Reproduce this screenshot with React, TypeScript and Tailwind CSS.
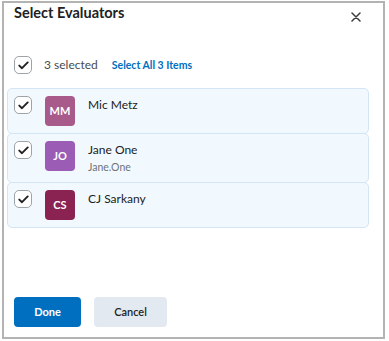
import React from "react";

function Check() {
  return (
    <div className="w-[18px] h-[18px] shrink-0 rounded-[5px] border border-[#9ea3a8] bg-white flex items-center justify-center">
      <svg width="11" height="9" viewBox="0 0 11 9" fill="none">
        <path d="M1.3 4.6 L4 7.2 L9.7 1.4" stroke="#202122" strokeWidth="1.9" strokeLinecap="round" strokeLinejoin="round" />
      </svg>
    </div>
  );
}

type Person = { initials: string; name: string; sub?: string; color: string };

const people: Person[] = [
  { initials: "MM", name: "Mic Metz", color: "bg-[#a85a8b]" },
  { initials: "JO", name: "Jane One", sub: "Jane.One", color: "bg-[#9a5cb4]" },
  { initials: "CS", name: "CJ Sarkany", color: "bg-[#8a2252]" },
];

export default function App() {
  return (
    <div className="w-[389px] h-[341px] bg-white pl-[2px] pt-[1px]" style={{ fontFamily: "Lato, 'Open Sans', sans-serif" }}>
      <div className="w-[383px] h-[338px] border-2 border-[#b3b3b3] flex flex-col text-[#202122]">
        <div className="flex items-start justify-between pl-[10px] pr-[22px]">
          <div className="text-[14.5px] leading-[20px] font-bold">Select Evaluators</div>
          <svg className="mt-[9px]" width="10" height="10" viewBox="0 0 10 10" fill="none">
            <path d="M1 1 L9 9 M9 1 L1 9" stroke="#3a3c3e" strokeWidth="1.5" strokeLinecap="round" />
          </svg>
        </div>
        <div className="flex items-center mt-[33px] pl-[10px]">
          <Check />
          <span className="ml-[12px] text-[12px] leading-[18px] text-[#494c4e]">3 selected</span>
          <span className="ml-[14px] text-[10.5px] leading-[18px] font-bold text-[#006fbf]">Select All 3 Items</span>
        </div>
        <div className="mt-[14px] ml-[3px] w-[362px] flex flex-col">
          {people.map((p) => (
            <div key={p.initials} className="flex items-start border border-[#d3e5f5] bg-[#f2f9fe] rounded-[5px] pl-[6px] py-[7px] -mt-px first:mt-0">
              <Check />
              <div className={`ml-[13px] w-[30px] h-[30px] shrink-0 rounded-[4px] ${p.color} flex items-center justify-center text-white text-[11px] font-bold`}>
                {p.initials}
              </div>
              <div className="ml-[13px] flex flex-col">
                <span className="text-[12px] leading-[18px] text-[#202122]">{p.name}</span>
                {p.sub && <span className="text-[10.5px] leading-[16px] text-[#6e7376]">{p.sub}</span>}
              </div>
            </div>
          ))}
        </div>
        <div className="mt-auto flex gap-[13px] pl-[10px] pb-[10px]">
          <button className="w-[67px] h-[30px] rounded-[4px] bg-[#006fbf] text-white text-[11px] font-bold">Done</button>
          <button className="w-[73px] h-[30px] rounded-[4px] bg-[#e3e9f1] text-[#202122] text-[11px] font-semibold">Cancel</button>
        </div>
      </div>
    </div>
  );
}
